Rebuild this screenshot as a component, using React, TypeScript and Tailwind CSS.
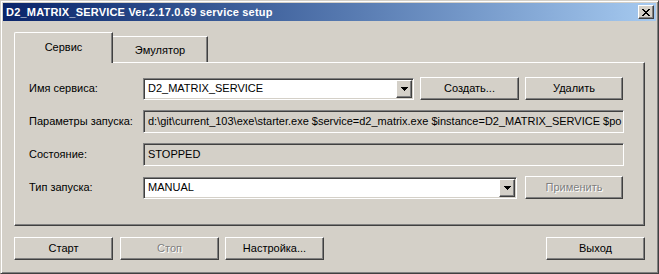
import React from "react";

const raised =
  "border border-t-white border-l-white border-r-[#404040] border-b-[#404040] shadow-[inset_-1px_-1px_0_#808080] bg-[#d4d0c8]";
const sunken =
  "border border-t-[#808080] border-l-[#808080] border-r-white border-b-white shadow-[inset_1px_1px_0_#404040,inset_-1px_-1px_0_#d4d0c8]";

function Btn({ label, w, disabled, extra = "" }: { label: string; w: string; disabled?: boolean; extra?: string }) {
  return (
    <div className={`${raised} ${w} ${extra} h-[23px] flex items-center justify-center shrink-0`}>
      <span
        className={
          disabled
            ? "text-[#808080] [text-shadow:1px_1px_0_#ffffff]"
            : "text-black"
        }
      >
        {label}
      </span>
    </div>
  );
}

function Arrow() {
  return (
    <svg width="7" height="4" viewBox="0 0 7 4" shapeRendering="crispEdges">
      <rect x="0" y="0" width="7" height="1" fill="#000" />
      <rect x="1" y="1" width="5" height="1" fill="#000" />
      <rect x="2" y="2" width="3" height="1" fill="#000" />
      <rect x="3" y="3" width="1" height="1" fill="#000" />
    </svg>
  );
}

function Combo({ value, w }: { value: string; w: string }) {
  return (
    <div className={`${sunken} ${w} h-[22px] bg-white flex items-stretch p-[1px] shrink-0`}>
      <div className="flex-1 flex items-center pl-[3px] overflow-hidden whitespace-nowrap">{value}</div>
      <div className={`${raised} w-[16px] flex items-center justify-center`}>
        <Arrow />
      </div>
    </div>
  );
}

function Field({ value, w }: { value: string; w: string }) {
  return (
    <div className={`${sunken} ${w} h-[23px] bg-[#d4d0c8] flex items-center pl-[4px] overflow-hidden whitespace-nowrap shrink-0`}>
      {value}
    </div>
  );
}

function Row({ label, children }: { label: string; children: React.ReactNode }) {
  return (
    <div className="flex items-center h-[23px]">
      <div className="w-[114px] shrink-0">{label}</div>
      {children}
    </div>
  );
}

function CloseGlyph() {
  const px: [number, number, number][] = [
    [0, 0, 2], [6, 0, 2],
    [1, 1, 2], [5, 1, 2],
    [2, 2, 4],
    [3, 3, 2],
    [2, 4, 4],
    [1, 5, 2], [5, 5, 2],
    [0, 6, 2], [6, 6, 2],
  ];
  return (
    <svg width="8" height="7" viewBox="0 0 8 7" shapeRendering="crispEdges">
      {px.map(([x, y, w], i) => (
        <rect key={i} x={x} y={y} width={w} height="1" fill="#000" />
      ))}
    </svg>
  );
}

export default function App() {
  return (
    <div className="w-[659px] h-[274px] bg-[#d4d0c8] border border-t-[#d4d0c8] border-l-[#d4d0c8] border-r-[#404040] border-b-[#404040] shadow-[inset_1px_1px_0_#ffffff,inset_-1px_-1px_0_#808080] p-[2px] flex flex-col font-['Liberation_Sans',Arial,sans-serif] text-[11px] text-black leading-none select-none">
      {/* Title bar */}
      <div className="h-[18px] shrink-0 flex items-center justify-between bg-gradient-to-r from-[#0a246a] to-[#a6caf0] pl-[3px] pr-[2px]">
        <span className="text-white font-bold text-[11px] tracking-[0.2px] whitespace-nowrap">
          D2_MATRIX_SERVICE Ver.2.17.0.69 service setup
        </span>
        <div className={`${raised} w-[16px] h-[14px] flex items-center justify-center`}>
          <CloseGlyph />
        </div>
      </div>

      {/* Body */}
      <div className="flex-1 flex flex-col px-[11px] pt-[11px]">
        {/* Tabs */}
        <div className="h-[30px] flex items-end shrink-0">
          <div className="relative z-10 w-[99px] h-[31px] -mb-px bg-[#d4d0c8] border-l border-t border-r border-l-white border-t-white border-r-[#404040] rounded-tl-[2px] shadow-[inset_-1px_0_0_#808080] flex items-center justify-center pb-[1px]">
            Сервис
          </div>
          <div className="w-[95px] h-[26px] bg-[#d4d0c8] border-t border-r border-t-white border-r-[#404040] shadow-[inset_-1px_0_0_#808080] flex items-center justify-center pt-[1px]">
            Эмулятор
          </div>
        </div>

        {/* Panel */}
        <div className="h-[164px] shrink-0 border border-t-white border-l-white border-r-[#404040] border-b-[#404040] shadow-[inset_-1px_-1px_0_#808080] pl-[14px] pt-[14px] flex flex-col gap-[10px]">
          <Row label="Имя сервиса:">
            <Combo value="D2_MATRIX_SERVICE" w="w-[271px]" />
            <Btn label="Создать..." w="w-[99px]" extra="ml-[6px]" />
            <Btn label="Удалить" w="w-[98px]" extra="ml-[6px]" />
          </Row>
          <Row label="Параметры запуска:">
            <Field
              value="d:\git\current_103\exe\starter.exe $service=d2_matrix.exe $instance=D2_MATRIX_SERVICE $po"
              w="w-[481px]"
            />
          </Row>
          <Row label="Состояние:">
            <Field value="STOPPED" w="w-[481px]" />
          </Row>
          <Row label="Тип запуска:">
            <Combo value="MANUAL" w="w-[374px]" />
            <Btn label="Применить" w="w-[98px]" extra="ml-[8px]" disabled />
          </Row>
        </div>

        {/* Bottom buttons */}
        <div className="mt-[11px] flex items-center justify-between">
          <div className="flex items-center">
            <Btn label="Старт" w="w-[99px]" />
            <Btn label="Стоп" w="w-[99px]" extra="ml-[7px]" disabled />
            <Btn label="Настройка..." w="w-[99px]" extra="ml-[6px]" />
          </div>
          <Btn label="Выход" w="w-[99px]" />
        </div>
      </div>
    </div>
  );
}
